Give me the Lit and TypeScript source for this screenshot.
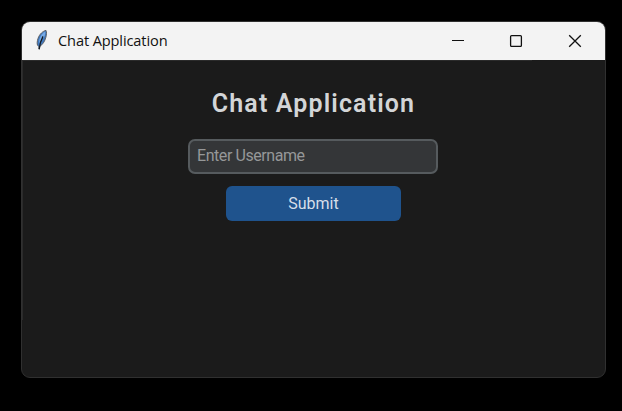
import { LitElement, html, css } from "lit";
import { customElement, property } from "lit/decorators.js";

@customElement("title-bar")
class TitleBar extends LitElement {
  @property() label = "";

  static styles = css`
    :host {
      display: flex;
      align-items: center;
      box-sizing: border-box;
      height: 38px;
      padding-right: 1px;
      background: #f3f3f3;
      color: #111;
    }
    .feather {
      width: 14px;
      height: 22px;
      margin-left: 13px;
      margin-bottom: 2px;
    }
    .label {
      flex: 1;
      margin: 0 0 2px 9px;
      font: 14.6px/20px "Open Sans", "Noto Sans", sans-serif;
      letter-spacing: -0.12px;
      white-space: nowrap;
    }
    .control {
      display: grid;
      place-items: center;
      width: 58.5px;
      height: 38px;
    }
    .control svg {
      width: 14px;
      height: 14px;
      fill: none;
      stroke: #111;
      stroke-width: 1.3;
    }
  `;

  render() {
    return html`
      <svg class="feather" viewBox="0 0 14 22">
        <path d="M11 1.4C8 2 4.6 5 3.1 9.2c-1 2.9-1.2 5.6-.5 7.2l1.2 1 .2 2.6.9-2.8c2.6-1.4 4.9-4.8 6-9 .7-2.8.8-5.4.1-6.8z" fill="#4079bf" stroke="#5c6066" stroke-width="1" />
        <path d="M10.3 2.6C7.6 4 5.5 6.8 4.4 10.4l-.4 4L9.2 8c.9-2 1.2-3.8 1.1-5.4z" fill="#78aae4" />
        <path d="M8 7.4C6.2 10.6 4.8 14 4.2 20.4" fill="none" stroke="#111820" stroke-width="1.3" />
      </svg>
      <span class="label">${this.label}</span>
      <span class="control"><svg viewBox="0 0 14 14"><path d="M1 6.5h12" stroke-width="1" /></svg></span>
      <span class="control"><svg viewBox="0 0 14 14"><rect x="1.6" y="1.6" width="10.8" height="10.8" rx="1" /></svg></span>
      <span class="control"><svg viewBox="0 0 14 14"><path d="M1.2 1.2l11.6 11.6M12.8 1.2L1.2 12.8" /></svg></span>
    `;
  }
}

@customElement("app-root")
class AppRoot extends LitElement {
  static styles = css`
    :host {
      display: block;
      box-sizing: border-box;
      width: 100vw;
      height: 100vh;
      padding: 21px 16px 33px 21px;
      background: #000;
      font-family: Roboto, sans-serif;
    }
    .window {
      box-sizing: border-box;
      height: 357px;
      border: 1px solid #303030;
      border-radius: 9px;
      overflow: hidden;
      background: #1b1b1b;
    }
    .content {
      display: flex;
      flex-direction: column;
      align-items: center;
      height: 317px;
      background:
        linear-gradient(#2b2b2b, #2b2b2b) 0 0 / 510px 1px no-repeat,
        linear-gradient(#2b2b2b, #2b2b2b) 0 0 / 1px 260px no-repeat;
    }
    h1 {
      margin: 28px 0 19px;
      font-size: 25px;
      line-height: 32px;
      font-weight: 600;
      letter-spacing: 1.13px;
      color: #d3d5d7;
    }
    input {
      box-sizing: border-box;
      width: 250px;
      height: 35px;
      margin-right: 1px;
      padding: 0 7px 3px;
      border: 2px solid #565b5e;
      border-radius: 7px;
      outline: none;
      background: #343638;
      color: #dce4ee;
      font: 16px Roboto, sans-serif;
      letter-spacing: -0.43px;
    }
    input::placeholder {
      color: #969899;
      opacity: 1;
    }
    button {
      width: 175px;
      height: 35px;
      margin-top: 12px;
      padding: 0;
      border: 0;
      border-radius: 6px;
      background: #1f538d;
      color: #d6dfe9;
      font: 16px Roboto, sans-serif;
    }
  `;

  render() {
    return html`
      <div class="window">
        <title-bar label="Chat Application"></title-bar>
        <div class="content">
          <h1>Chat Application</h1>
          <input type="text" placeholder="Enter Username" />
          <button>Submit</button>
        </div>
      </div>
    `;
  }
}
